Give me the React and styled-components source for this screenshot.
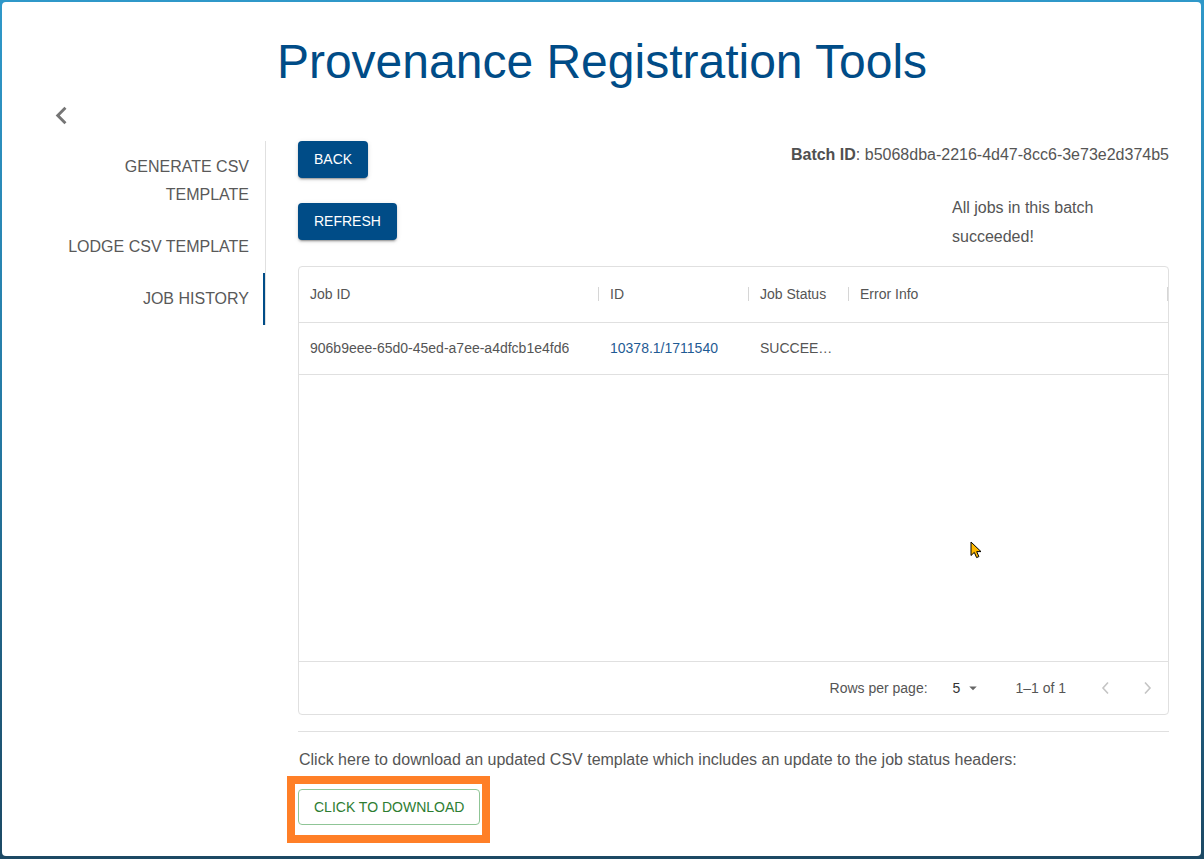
import React from 'react';
import styled, { createGlobalStyle } from 'styled-components';

const GlobalStyle = createGlobalStyle`
  html, body {
    margin: 0;
    padding: 0;
    height: 100%;
  }
  body {
    background: linear-gradient(180deg, #2f98c9 0%, #2479a3 50%, #1c4964 100%);
    font-family: "Liberation Sans", Arial, sans-serif;
    overflow: hidden;
  }
`;

const Panel = styled.div`
  position: relative;
  box-sizing: border-box;
  margin: 2px 3px 3px 2px;
  height: 854px;
  background: #fff;
  border-radius: 4px;
  padding: 32px 32px 0 33px;
`;

const Title = styled.h1`
  margin: 0;
  font-size: 48px;
  line-height: 56px;
  font-weight: 400;
  color: #004c87;
  text-align: center;
`;

const CollapseRow = styled.div`
  height: 51px;
  display: flex;
  align-items: center;
  padding-left: 9px;
`;

const IconButton = styled.button`
  border: 0;
  background: none;
  padding: 0;
  display: flex;
  cursor: pointer;
  color: ${({ $color }) => $color || '#757575'};
`;

const Body = styled.div`
  display: grid;
  grid-template-columns: 231px 1fr;
  column-gap: 32px;
  align-items: start;
`;

const Tabs = styled.nav`
  display: flex;
  flex-direction: column;
  border-right: 1px solid #e0e0e0;
`;

const Tab = styled.div`
  padding: 12px 16px;
  text-align: right;
  font-size: 16px;
  line-height: 28px;
  color: #595959;
  text-transform: uppercase;
  cursor: pointer;
  box-shadow: ${({ $active }) => ($active ? 'inset -2px 0 0 #004c87' : 'none')};
`;

const Main = styled.main`
  display: flex;
  flex-direction: column;
`;

const TopRow = styled.div`
  display: flex;
  justify-content: space-between;
  align-items: ${({ $align }) => $align || 'flex-start'};
  margin-bottom: ${({ $gap }) => $gap || 0}px;
`;

const Button = styled.button`
  font-family: inherit;
  font-size: 14px;
  line-height: 24.5px;
  text-transform: uppercase;
  border-radius: 4px;
  cursor: pointer;
  padding: ${({ $outlined }) => ($outlined ? '5px 15px' : '6px 16px')};
  color: ${({ $outlined }) => ($outlined ? '#2e7d32' : '#fff')};
  background: ${({ $outlined }) => ($outlined ? '#fff' : '#004c87')};
  border: ${({ $outlined }) => ($outlined ? '1px solid #8fc596' : '0')};
  box-shadow: ${({ $outlined }) =>
    $outlined
      ? 'none'
      : '0 3px 1px -2px rgba(0,0,0,0.2), 0 2px 2px 0 rgba(0,0,0,0.14), 0 1px 5px 0 rgba(0,0,0,0.12)'};
`;

const BatchId = styled.div`
  padding-top: 2px;
  font-size: 16px;
  line-height: 24px;
  color: #555;

  b {
    font-weight: 700;
    color: #505050;
  }
`;

const Status = styled.div`
  width: 217px;
  font-size: 16px;
  line-height: 29px;
  color: #555;
`;

const Grid = styled.div`
  height: 449px;
  box-sizing: border-box;
  border: 1px solid #e0e0e0;
  border-radius: 4px;
  display: flex;
  flex-direction: column;
  font-size: 14px;
  color: #555;
`;

const Row = styled.div`
  display: grid;
  grid-template-columns: 300px 150px 100px 1fr;
  height: ${({ $h }) => $h}px;
  border-bottom: 1px solid #e0e0e0;
`;

const HeadCell = styled.div`
  position: relative;
  display: flex;
  align-items: center;
  padding: 0 11px;

  &::after {
    content: '';
    position: absolute;
    right: 0;
    top: 20px;
    height: 14px;
    width: 1px;
    background: #d6d6d6;
  }
`;

const Cell = styled.div`
  display: flex;
  align-items: center;
  padding: 0 11px;
  min-width: 0;
  color: ${({ $link }) => ($link ? '#1f5b94' : '#555')};

  span {
    overflow: hidden;
    white-space: nowrap;
    text-overflow: ellipsis;
  }
`;

const Filler = styled.div`
  flex: 1;
`;

const Footer = styled.div`
  height: 52px;
  border-top: 1px solid #e0e0e0;
  display: flex;
  align-items: center;
  justify-content: flex-end;
  padding-right: 1px;
  color: #555;
`;

const RowsSelect = styled.div`
  display: flex;
  align-items: center;
  gap: 4px;
  margin-left: 25px;
  color: #333;
`;

const Displayed = styled.span`
  margin-left: 33px;
`;

const Actions = styled.div`
  display: flex;
  margin-left: 20px;
  gap: 1px;
`;

const PageButton = styled.button`
  width: 40px;
  height: 40px;
  border: 0;
  background: none;
  display: flex;
  align-items: center;
  justify-content: center;
  color: #c4c4c4;
  padding: 0;
`;

const Divider = styled.hr`
  margin: 16px 0 0;
  border: 0;
  border-top: 1px solid #e0e0e0;
`;

const Note = styled.p`
  margin: 16px 0 0 1px;
  font-size: 16px;
  line-height: 24px;
  color: #555;
`;

const Highlight = styled.div`
  align-self: flex-start;
  margin: 4px 0 0 -11px;
  border: 8px solid #ff7f27;
  padding: 5px 2px 10px 3px;
  display: flex;
`;

const Pointer = styled.svg`
  position: absolute;
  left: 968px;
  top: 539px;
`;

const ChevronLeft = ({ size = 35 }) => (
  <svg width={size} height={size} viewBox="0 0 24 24" fill="currentColor">
    <path d="M15.41 7.41 14 6l-6 6 6 6 1.41-1.41L10.83 12z" />
  </svg>
);

const ThinChevron = ({ dir }) => (
  <svg width="12" height="14" viewBox="0 0 12 14" fill="none" stroke="currentColor" strokeWidth="1.6">
    {dir === 'left' ? <polyline points="8,1.5 3,7 8,12.5" /> : <polyline points="4,1.5 9,7 4,12.5" />}
  </svg>
);

const columns = ['Job ID', 'ID', 'Job Status', 'Error Info'];

const App = () => {
  return (
    <>
      <GlobalStyle />
      <Panel>
        <Title>Provenance Registration Tools</Title>
        <CollapseRow>
          <IconButton aria-label="collapse">
            <ChevronLeft />
          </IconButton>
        </CollapseRow>
        <Body>
          <Tabs>
            <Tab>Generate CSV Template</Tab>
            <Tab>Lodge CSV Template</Tab>
            <Tab $active>Job History</Tab>
          </Tabs>
          <Main>
            <TopRow $gap={15}>
              <Button>Back</Button>
              <BatchId>
                <b>Batch ID</b>: b5068dba-2216-4d47-8cc6-3e73e2d374b5
              </BatchId>
            </TopRow>
            <TopRow $align="center" $gap={15}>
              <Button>Refresh</Button>
              <Status>All jobs in this batch succeeded!</Status>
            </TopRow>
            <Grid>
              <Row $h={55}>
                {columns.map(c => (
                  <HeadCell key={c}>{c}</HeadCell>
                ))}
              </Row>
              <Row $h={51}>
                <Cell><span>906b9eee-65d0-45ed-a7ee-a4dfcb1e4fd6</span></Cell>
                <Cell $link><span>10378.1/1711540</span></Cell>
                <Cell><span>SUCCEEDED</span></Cell>
                <Cell />
              </Row>
              <Filler />
              <Footer>
                <span>Rows per page:</span>
                <RowsSelect>
                  <span>5</span>
                  <svg width="18" height="18" viewBox="0 0 24 24" fill="#666">
                    <path d="m7 10 5 5 5-5z" />
                  </svg>
                </RowsSelect>
                <Displayed>1–1 of 1</Displayed>
                <Actions>
                  <PageButton disabled aria-label="previous page">
                    <ThinChevron dir="left" />
                  </PageButton>
                  <PageButton disabled aria-label="next page">
                    <ThinChevron dir="right" />
                  </PageButton>
                </Actions>
              </Footer>
            </Grid>
            <Divider />
            <Note>
              Click here to download an updated CSV template which includes an update to the job status headers:
            </Note>
            <Highlight>
              <Button $outlined>Click to download</Button>
            </Highlight>
          </Main>
        </Body>
        <Pointer width="13" height="19" viewBox="0 0 13 19">
          <path
            d="M1 1 L1 14.5 L4.3 11.4 L6.6 16.6 L8.9 15.6 L6.7 10.6 L11 10.6 Z"
            fill="#ffb900"
            stroke="#000"
            strokeWidth="1"
            strokeLinejoin="round"
          />
        </Pointer>
      </Panel>
    </>
  );
};

export default App;
